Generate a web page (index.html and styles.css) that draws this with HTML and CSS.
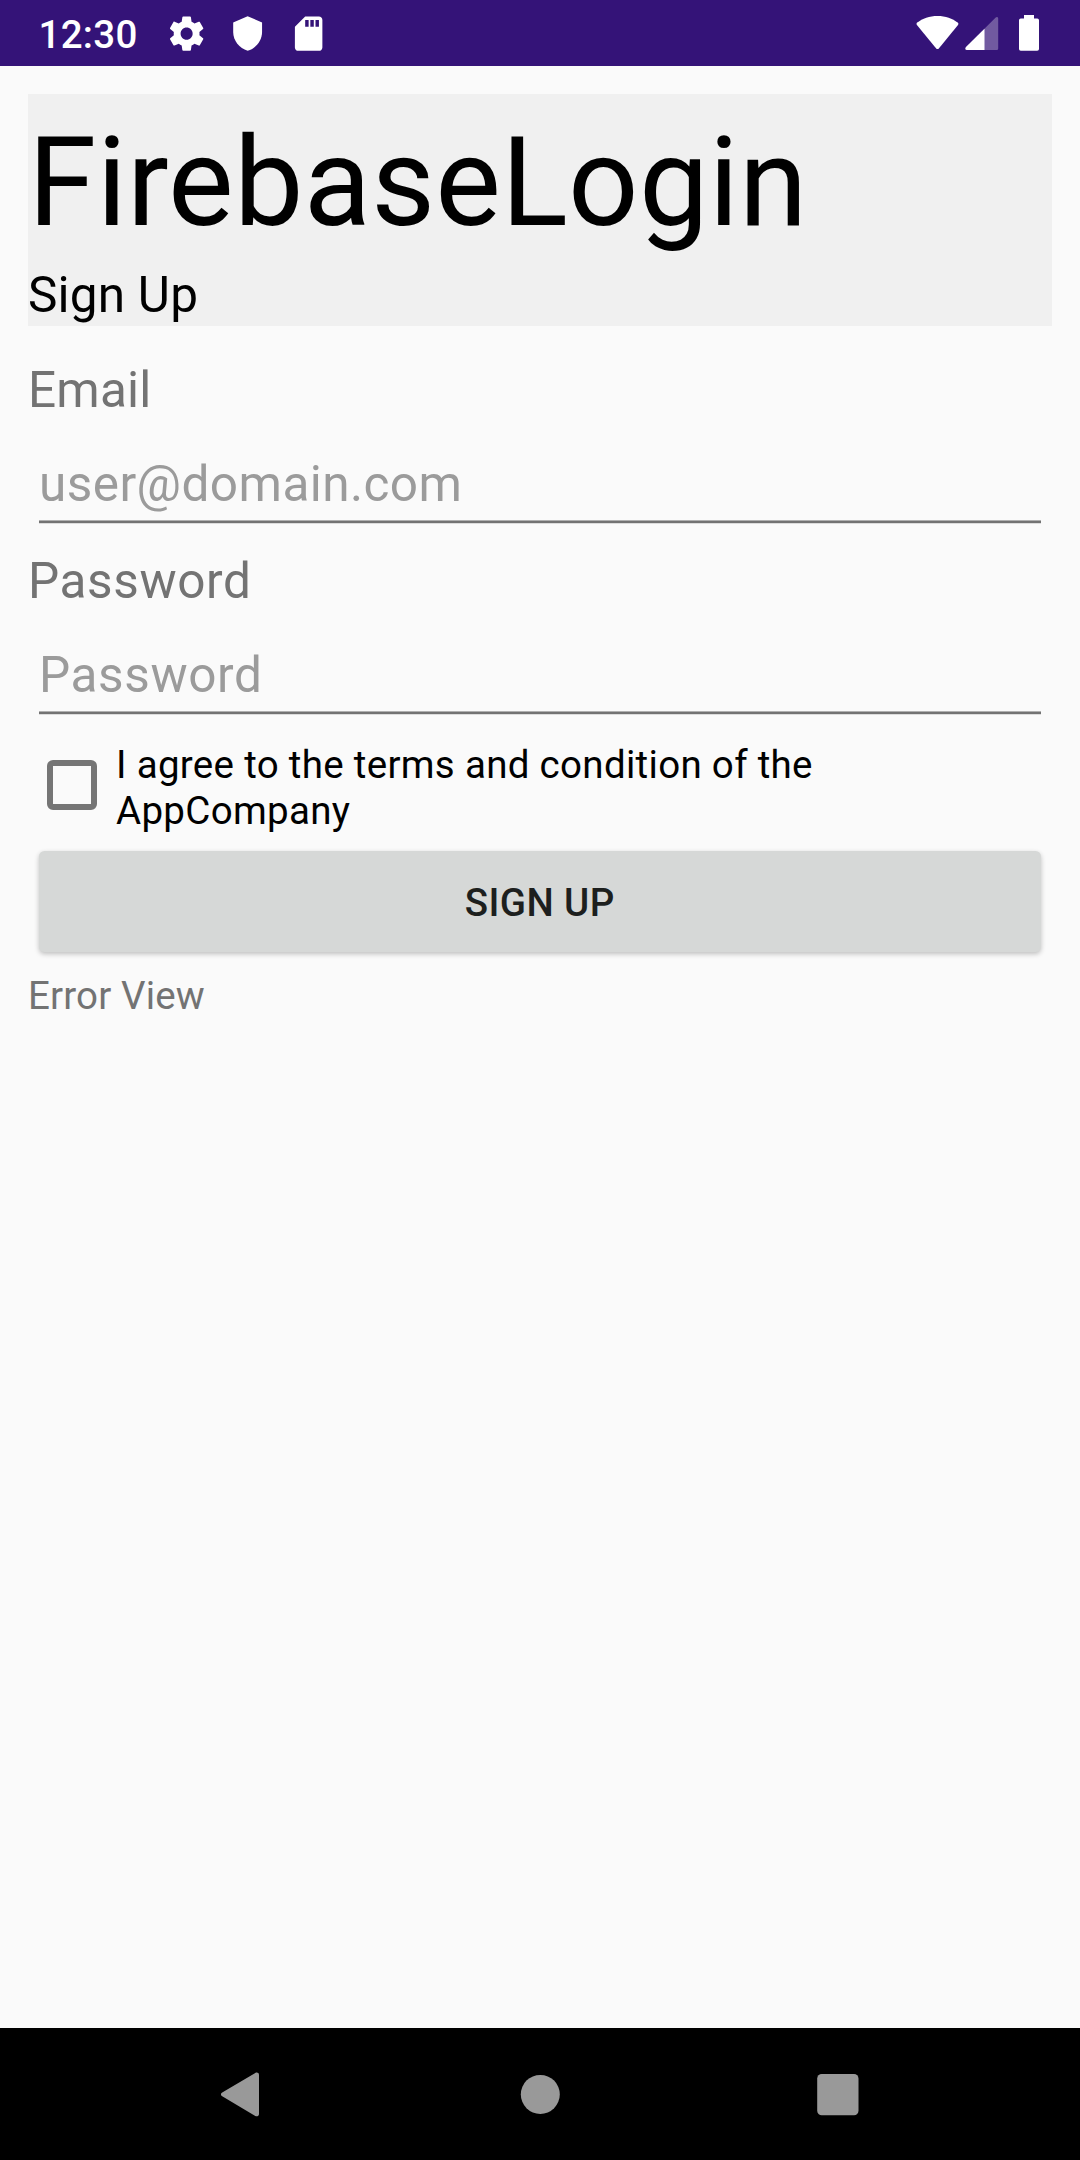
FILE: index.html
```html
<!DOCTYPE html>
<html lang="en">
<head>
<meta charset="utf-8">
<title>FirebaseLogin</title>
<link rel="stylesheet" href="styles.css">
</head>
<body>
<div class="screen">
  <div class="status-bar">
    <span class="clock">12:30</span>
    <div class="notifications">
      <svg class="notice" viewBox="0 0 24 24"><path d="M19.43 12.98c.04-.32.07-.64.07-.98s-.03-.66-.07-.98l2.11-1.65c.19-.15.24-.42.12-.64l-2-3.46c-.12-.22-.39-.3-.61-.22l-2.49 1c-.52-.4-1.08-.73-1.69-.98l-.38-2.65C14.46 2.18 14.25 2 14 2h-4c-.25 0-.46.18-.49.42l-.38 2.65c-.61.25-1.17.59-1.69.98l-2.49-1c-.23-.09-.49 0-.61.22l-2 3.46c-.13.22-.07.49.12.64l2.11 1.65c-.04.32-.07.65-.07.98s.03.66.07.98l-2.11 1.65c-.19.15-.24.42-.12.64l2 3.46c.12.22.39.3.61.22l2.49-1c.52.4 1.08.73 1.69.98l.38 2.65c.03.24.24.42.49.42h4c.25 0 .46-.18.49-.42l.38-2.65c.61-.25 1.17-.59 1.69-.98l2.49 1c.23.09.49 0 .61-.22l2-3.46c.12-.22.07-.49-.12-.64l-2.11-1.65zM12 15.5c-1.93 0-3.5-1.57-3.5-3.5s1.57-3.5 3.5-3.5 3.5 1.57 3.5 3.5-1.57 3.5-3.5 3.5z"/></svg>
      <svg class="notice" viewBox="0 0 24 24"><path d="M12 1.900L3.600 5.500v5.600c0 5 3.600 9.600 8.400 10.800 4.800-1.200 8.400-5.800 8.400-10.800V5.500z"/></svg>
      <svg class="notice" viewBox="0 0 24 24"><path d="M18 2h-8L4.020 8 4 20c0 1.100.9 2 2 2h12c1.100 0 2-.9 2-2V4c0-1.100-.9-2-2-2zm-6 6h-2V4h2v4zm3 0h-2V4h2v4zm3 0h-2V4h2v4z"/></svg>
    </div>
    <div class="system-icons">
      <svg class="wifi" viewBox="0 0 43 36"><path d="M21.500 1C13.500 1 6.500 3.500 1.200 7.600.4 8.300.3 9.200.9 10L20.200 33.400c.7.800 1.900.8 2.600 0L42 10c.6-.8.500-1.700-.3-2.400C36.500 3.500 29.500 1 21.500 1z"/></svg>
      <svg class="signal" viewBox="0 0 34 36"><path opacity=".3" d="M33.200 3.500V33.500q0 1.500-1.500 1.500H2C0 35 0 33 1 32L30.700 2.500c1-1 2.500-.5 2.500 1z"/><path d="M19.500 13.700V35H2C0 35 0 33 1 32z"/></svg>
      <svg class="battery" viewBox="0 0 20 36"><path d="M5 0h10v3.500h3.200q1.800 0 1.800 1.800v28.700q0 1.800-1.800 1.800H1.800Q0 35.800 0 34V5.300Q0 3.500 1.800 3.500H5z"/></svg>
    </div>
  </div>

  <main class="content">
    <header class="header">
      <h1 class="title">FirebaseLogin</h1>
      <h2 class="text-large">Sign Up</h2>
    </header>
    <form class="form">
      <label class="text-large label" for="email">Email</label>
      <input class="field" id="email" type="email" placeholder="user@domain.com">
      <label class="text-large label label-password" for="password">Password</label>
      <input class="field field-password" id="password" type="password" placeholder="Password">
      <label class="terms">
        <input class="checkbox" type="checkbox">
        <span>I agree to the terms and condition of the<br>AppCompany</span>
      </label>
      <button class="submit" type="button">SIGN UP</button>
      <p class="error">Error View</p>
    </form>
  </main>

  <nav class="nav-bar">
    <svg class="nav-icon" viewBox="0 0 48 48"><path d="M3.200 22.600 36.300 2.900c1.500-.9 3.700-.2 3.700 2v39c0 2.200-2.200 2.900-3.700 2L3.200 26.200c-1.700-1-1.700-2.600 0-3.600z"/></svg>
    <svg class="nav-icon" viewBox="0 0 48 48"><circle cx="24.300" cy="24.400" r="19.500"/></svg>
    <svg class="nav-icon" viewBox="0 0 48 48"><rect x="3.200" y="4" width="41.300" height="41.300" rx="4.500"/></svg>
  </nav>
</div>
</body>
</html>
```
FILE: styles.css
```css
* {
  box-sizing: border-box;
}

body {
  margin: 0;
  background: #fafafa;
  font-family: Roboto, sans-serif;
}

.screen {
  display: flex;
  flex-direction: column;
  width: 1080px;
  height: 2160px;
}

.status-bar {
  display: flex;
  align-items: center;
  height: 66px;
  padding: 0 41px 0 38.5px;
  background: #341378;
  color: #fff;
  fill: #fff;
}

.clock {
  width: 127.5px;
  padding-top: 4px;
  font-size: 38.5px;
  line-height: 62px;
  font-weight: 500;
  letter-spacing: .3px;
}

.notifications {
  display: flex;
  gap: 19.600px;
}

.notice {
  width: 41.250px;
  height: 41.250px;
  margin-top: 1px;
}

.system-icons {
  display: flex;
  margin-left: auto;
}

.wifi {
  width: 43px;
  height: 36px;
}

.signal {
  width: 34px;
  height: 36px;
  margin-left: 5.500px;
}

.battery {
  width: 20px;
  height: 36px;
  margin-left: 20.500px;
}

.content {
  flex: 1;
  padding: 28px;
}

.header {
  height: 232px;
  background: #f0f0f0;
  color: #000;
}

.title {
  margin: 0;
  padding-top: 11px;
  font-size: 123.75px;
  line-height: 155px;
  font-weight: 400;
  letter-spacing: .25px;
}

.text-large {
  display: block;
  margin: 0;
  padding-top: 4px;
  font-size: 49.5px;
  line-height: 62px;
  font-weight: 400;
  letter-spacing: .2px;
}

.form {
  display: flex;
  flex-direction: column;
  padding-top: 29px;
}

.label,
.error {
  color: #737373;
}

.label-password {
  letter-spacing: .6px;
}

.field {
  height: 102px;
  margin: 0 11px 23px;
  padding: 33px 0 8px;
  border: 0;
  border-bottom: 2px solid #737373;
  border-radius: 0;
  outline: 0;
  background: linear-gradient(#b0b0b0, #b0b0b0) bottom / 100% 1px no-repeat;
  background-origin: padding-box;
  box-shadow: 0 1px 0 #dcdcdc;
  font: 400 49.5px/58px Roboto, sans-serif;
  letter-spacing: .44px;
}

.field-password {
  letter-spacing: .6px;
}

.field::placeholder {
  color: #9b9b9b;
  opacity: 1;
}

.terms {
  display: flex;
  align-items: flex-start;
  gap: 19px;
  height: 103px;
  padding: 5px 0 0 19px;
  color: #000;
  font-size: 38.5px;
  line-height: 46px;
  letter-spacing: .31px;
}

.checkbox {
  appearance: none;
  width: 50px;
  height: 50px;
  margin: 18px 0 0;
  border: 6px solid #757575;
  border-radius: 6px;
}

.submit {
  height: 100.5px;
  margin: 11px 11px 0 10.5px;
  padding: 3px 0 0;
  border: 0;
  border-radius: 5.5px;
  background: #d6d8d7;
  box-shadow: 0 2px 5px rgba(0, 0, 0, .24);
  color: #1d1f1e;
  font: 500 38.5px/97.5px Roboto, sans-serif;
  letter-spacing: .4px;
}

.error {
  margin: 17.5px 0 0;
  font-size: 38.5px;
  line-height: 54px;
  letter-spacing: .15px;
}

.nav-bar {
  display: flex;
  justify-content: center;
  align-items: center;
  gap: 249.500px;
  height: 132px;
  background: #000;
  fill: #999;
}

.nav-icon {
  width: 48px;
  height: 48px;
}
```
